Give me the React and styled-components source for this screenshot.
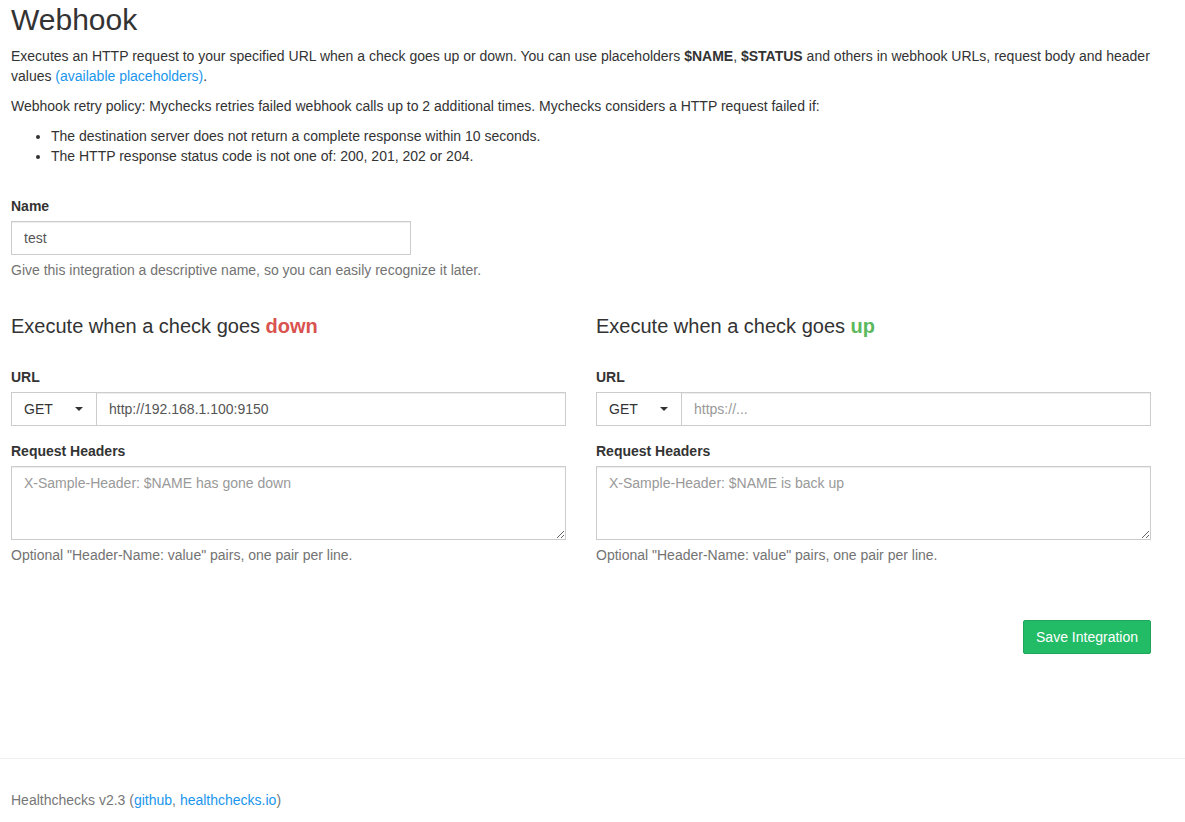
import React from 'react';
import styled, {createGlobalStyle} from 'styled-components';

const GlobalStyle = createGlobalStyle`
  * {
    box-sizing: border-box;
  }

  body {
    margin: 0;
    background: #fff;
    color: #333;
    font-family: "Liberation Sans", Arial, sans-serif;
    font-size: 14px;
    line-height: 20px;
  }
`;

const App = () => {
  return (
      <>
        <GlobalStyle/>
        <Page>
          <Title>Webhook</Title>
          <Text>
            Executes an HTTP request to your specified URL when a check goes up
            or down. You can use placeholders <strong>$NAME</strong>,{' '}
            <strong>$STATUS</strong> and others in webhook URLs, request body
            and header values <Link href="#">(available placeholders)</Link>.
          </Text>
          <Text>
            Webhook retry policy: Mychecks retries failed webhook calls up to 2
            additional times. Mychecks considers a HTTP request failed if:
          </Text>
          <List>
            <li>The destination server does not return a complete response within
              10 seconds.
            </li>
            <li>The HTTP response status code is not one of: 200, 201, 202 or
              204.
            </li>
          </List>

          <NameGroup>
            <Label>Name</Label>
            <NameInput defaultValue="test"/>
            <Help>Give this integration a descriptive name, so you can easily
              recognize it later.</Help>
          </NameGroup>

          <Columns>
            <Endpoint
                word="down"
                url="http://192.168.1.100:9150"
                headers="X-Sample-Header: $NAME has gone down"
            />
            <Endpoint
                word="up"
                url=""
                headers="X-Sample-Header: $NAME is back up"
            />
          </Columns>

          <Actions>
            <SaveButton>Save Integration</SaveButton>
          </Actions>
        </Page>

        <Footer>
          <FooterText>
            Healthchecks v2.3 (<Link href="#">github</Link>,{' '}
            <Link href="#">healthchecks.io</Link>)
          </FooterText>
        </Footer>
      </>
  );
};

// one half of the down / up form
const Endpoint = ({word, url, headers}) => (
    <Column>
      <SubTitle>
        Execute when a check goes <Status $up={word === 'up'}>{word}</Status>
      </SubTitle>

      <Label>URL</Label>
      <InputGroup>
        <MethodButton type="button">
          GET <Caret/>
        </MethodButton>
        <UrlInput defaultValue={url} placeholder="https://..."/>
      </InputGroup>

      <HeadersLabel>Request Headers</HeadersLabel>
      <HeadersArea placeholder={headers}/>
      <Help>Optional "Header-Name: value" pairs, one pair per line.</Help>
    </Column>
);

export default App;

const Page = styled.div`
  width: 1140px;
  margin-left: 11px;
  display: flex;
  flex-direction: column;
`;

const Title = styled.h1`
  margin: 3px 0 0;
  font-size: 30px;
  font-weight: 500;
  line-height: 33px;
`;

const Text = styled.p`
  margin: 10px 0 0;

  strong {
    font-weight: bold;
  }
`;

const Link = styled.a`
  color: #1a96ec;
  text-decoration: none;
`;

const List = styled.ul`
  margin: 10px 0 0;
  padding-left: 40px;
`;

const NameGroup = styled.div`
  margin-top: 30px;
  display: flex;
  flex-direction: column;
`;

const Label = styled.label`
  display: block;
  font-weight: bold;
  margin-bottom: 5px;
`;

const Help = styled.div`
  margin-top: 5px;
  color: #737373;
`;

const BaseInput = styled.input`
  height: 34px;
  padding: 6px 12px;
  font: inherit;
  color: #555;
  background: #fff;
  border: 1px solid #ccc;
  border-radius: 0;
  box-shadow: inset 0 1px 1px rgba(0, 0, 0, 0.075);
  outline: none;

  &::placeholder {
    color: #999;
  }
`;

const NameInput = styled(BaseInput)`
  width: 400px;
`;

const Columns = styled.div`
  margin-top: 35px;
  display: grid;
  grid-template-columns: 1fr 1fr;
  column-gap: 30px;
`;

const Column = styled.div`
  display: flex;
  flex-direction: column;
`;

const SubTitle = styled.h3`
  margin: 0 0 30px;
  font-size: 20px;
  font-weight: normal;
  line-height: 22px;
`;

const Status = styled.strong`
  color: ${({$up}) => ($up ? '#5cb85c' : '#d9534f')};
`;

const InputGroup = styled.div`
  display: flex;
  height: 34px;
`;

const MethodButton = styled.button`
  width: 85px;
  display: flex;
  align-items: center;
  justify-content: space-between;
  padding: 0 13px 0 12px;
  font: inherit;
  color: #333;
  background: #fff;
  border: 1px solid #ccc;
  border-right: none;
  border-radius: 0;
`;

const Caret = styled.span`
  width: 0;
  height: 0;
  border-top: 4px solid #333;
  border-left: 4px solid transparent;
  border-right: 4px solid transparent;
`;

const UrlInput = styled(BaseInput)`
  flex: 1;
  min-width: 0;
`;

const HeadersLabel = styled(Label)`
  margin-top: 15px;
`;

const HeadersArea = styled.textarea`
  height: 74px;
  padding: 6px 12px;
  font: inherit;
  color: #555;
  border: 1px solid #ccc;
  border-radius: 0;
  box-shadow: inset 0 1px 1px rgba(0, 0, 0, 0.075);
  outline: none;
  resize: vertical;

  &::placeholder {
    color: #999;
  }
`;

const Actions = styled.div`
  margin-top: 55px;
  display: flex;
  justify-content: flex-end;
`;

const SaveButton = styled.button`
  height: 34px;
  padding: 6px 12px;
  font: inherit;
  color: #fff;
  background: #22bc66;
  border: 1px solid #1ea65a;
  border-radius: 2px;
  cursor: pointer;
`;

const Footer = styled.footer`
  margin-top: 104px;
  border-top: 1px solid #eee;
  padding: 31px 0 0 11px;
`;

const FooterText = styled.div`
  color: #777;
`;
